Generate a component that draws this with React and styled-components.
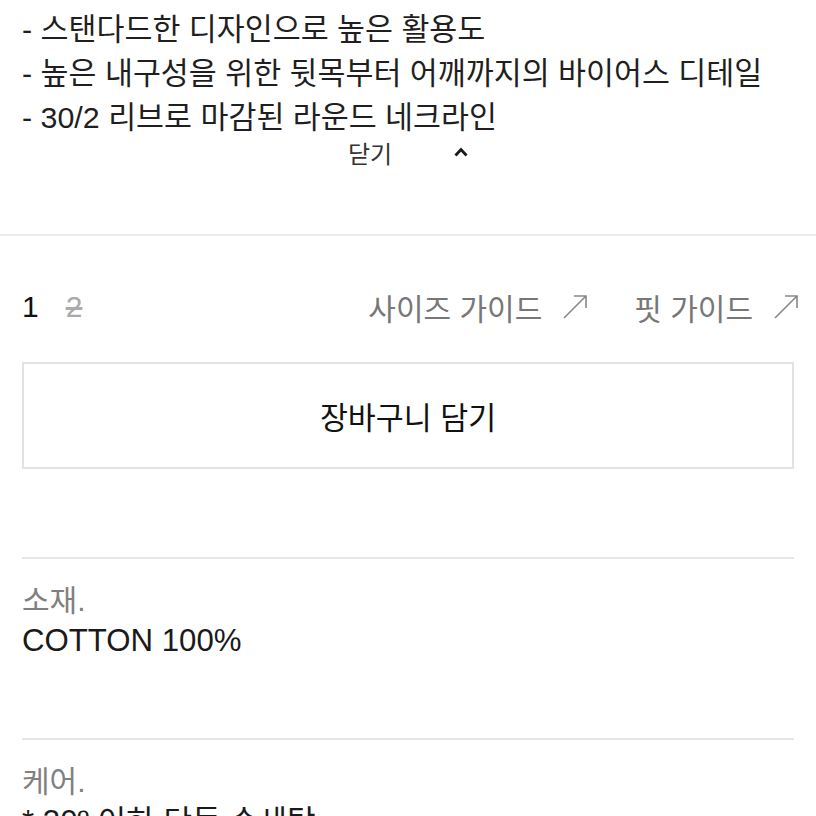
import React from 'react';
import styled, { createGlobalStyle } from 'styled-components';

const GlobalStyle = createGlobalStyle`
  body {
    margin: 0;
    background: #fff;
    font-family: "Liberation Sans", "Noto Sans CJK KR", sans-serif;
    color: #1a1a1a;
  }
`;

const Page = styled.div`
  width: 816px;
  height: 816px;
  overflow: hidden;
`;

const Description = styled.div`
  padding: 7px 22px 69px;
  border-bottom: 2px solid #ececec;
`;

const DescLine = styled.div`
  font-size: 30.4px;
  line-height: 44px;
  color: #1f1f1f;
  white-space: nowrap;
`;

const CloseRow = styled.div`
  display: flex;
  justify-content: center;
  align-items: center;
  gap: 62px;
  height: 26px;
  font-size: 24px;
  color: #333;
`;

const OptionRow = styled.div`
  display: flex;
  align-items: center;
  justify-content: space-between;
  padding: 54px 17px 0 22px;
  height: 34px;
  font-size: 30px;
`;

const Numbers = styled.div`
  display: flex;
  gap: 27px;
`;

const Num = styled.span`
  color: ${(p) => (p.$off ? '#aaa' : '#111')};
  text-decoration: ${(p) => (p.$off ? 'line-through' : 'none')};
`;

const Guides = styled.div`
  display: flex;
  gap: 46px;
`;

const GuideLink = styled.a`
  display: flex;
  align-items: center;
  gap: 20px;
  color: #777;
  text-decoration: none;
`;

const CartButton = styled.button`
  display: block;
  box-sizing: border-box;
  margin: 38px 22px 0;
  width: 772px;
  height: 107px;
  background: #fff;
  border: 2px solid #e2e2e2;
  font-family: inherit;
  font-size: 30.4px;
  color: #111;
`;

const InfoBlock = styled.div`
  margin: ${(p) => (p.$first ? '88px' : '0')} 22px 0;
  border-top: 2px solid #e6e6e6;
  padding: 22px 0 77px;
`;

const InfoLabel = styled.div`
  font-size: 30px;
  line-height: 40px;
  color: #808080;
`;

const InfoValue = styled.div`
  font-size: 31.2px;
  line-height: 40px;
  color: #1a1a1a;
`;

const Chevron = () => (
  <svg width="14" height="10" viewBox="0 0 14 10">
    <polyline points="1.5,8.5 7,2.5 12.5,8.5" fill="none" stroke="#1a1a1a" strokeWidth="2.8" />
  </svg>
);

const Arrow = () => (
  <svg width="26" height="26" viewBox="0 0 26 26">
    <path d="M2 24 L24 2 M12 2 H24 V14" fill="none" stroke="#888" strokeWidth="1.6" />
  </svg>
);

const details = [
  '- 스탠다드한 디자인으로 높은 활용도',
  '- 높은 내구성을 위한 뒷목부터 어깨까지의 바이어스 디테일',
  '- 30/2 리브로 마감된 라운드 네크라인',
];

export default function App() {
  return (
    <Page>
      <GlobalStyle />
      <Description>
        {details.map((line) => (
          <DescLine key={line}>{line}</DescLine>
        ))}
        <CloseRow>
          <span>닫기</span>
          <Chevron />
        </CloseRow>
      </Description>

      <OptionRow>
        <Numbers>
          <Num>1</Num>
          <Num $off>2</Num>
        </Numbers>
        <Guides>
          <GuideLink href="#">사이즈 가이드 <Arrow /></GuideLink>
          <GuideLink href="#">핏 가이드 <Arrow /></GuideLink>
        </Guides>
      </OptionRow>

      <CartButton>장바구니 담기</CartButton>

      <InfoBlock $first>
        <InfoLabel>소재.</InfoLabel>
        <InfoValue>COTTON 100%</InfoValue>
      </InfoBlock>
      <InfoBlock>
        <InfoLabel>케어.</InfoLabel>
        <InfoValue>* 30º 이하 단독 손세탁</InfoValue>
      </InfoBlock>
    </Page>
  );
}
